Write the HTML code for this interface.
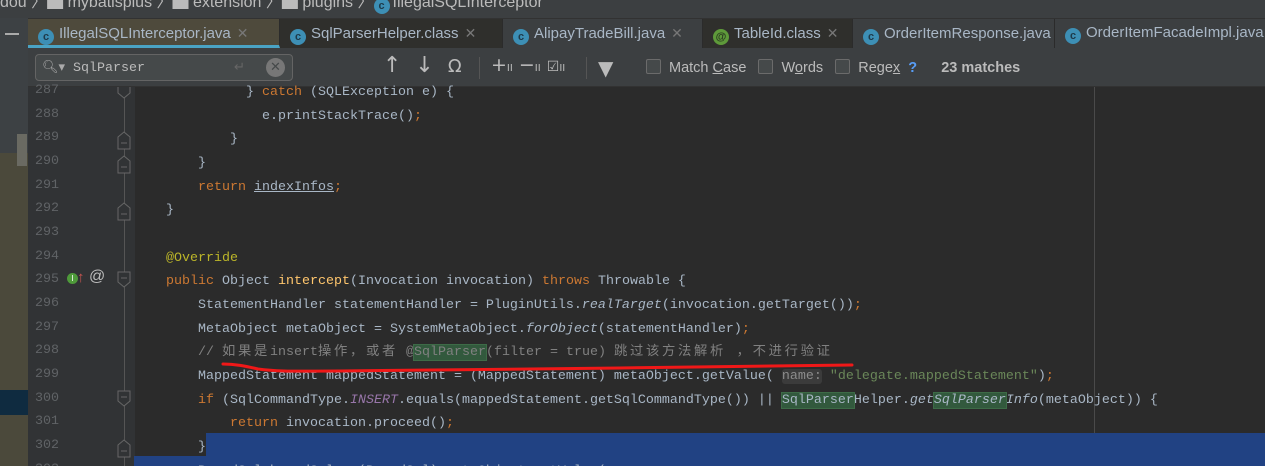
<!DOCTYPE html>
<html><head><meta charset="utf-8"><style>
*{margin:0;padding:0;box-sizing:border-box}
html,body{width:1265px;height:466px;overflow:hidden}
body{background:#2b2b2b;position:relative;font-family:"Liberation Sans","Noto Sans CJK SC",sans-serif;}
.abs{position:absolute}
.crumb{left:0;top:0;width:1265px;height:18px;background:#3c3f41;color:#bbb;font-size:16px;line-height:14px;white-space:nowrap;overflow:hidden}
.tabs{left:28px;top:18px;width:1237px;height:30px;background:#3c3f41;border-top:1px solid #323232}
.tab{position:absolute;top:0;height:29px;color:#a9b7c6;font-size:15px;line-height:28px;white-space:nowrap;border-right:1px solid #2b2b2b;overflow:hidden}
.ic{display:inline-block;width:16px;height:16px;border-radius:50%;background:#3d8fb5;color:#1e3a4a;font-size:11px;line-height:16px;text-align:center;font-weight:bold;vertical-align:-2px;margin:0 5px 0 10px}
.x{color:#777;margin-left:6px;font-size:14px}
.find{left:28px;top:48px;width:1237px;height:39px;background:#3c3f41;border-bottom:1px solid #323232}
.gut{left:28px;top:87px;width:107px;height:379px;background:#313335}
.code{left:0;top:83px;font-family:"Liberation Mono","Noto Sans CJK SC",monospace;font-size:13.33px;white-space:pre;color:#a9b7c6}
.ln{position:absolute;left:28px;width:31px;text-align:right;color:#606366;font-family:"Liberation Mono",monospace;font-size:13.33px}
.l{position:absolute;left:134px;height:24px;line-height:24px}
.k{color:#cc7832}.f{color:#ffc66d}.a{color:#bbb529}.cm{color:#808080}.s{color:#6a8759}.p{color:#9876aa;font-style:italic}.i{font-style:italic}
.m{background:#32593d;outline:1px solid #3d6b47}
.cj{letter-spacing:2.67px}
.cb{display:inline-block;width:15px;height:15px;border:1px solid #6b6b6b;border-radius:2px;background:#45494a;vertical-align:-2px;margin-right:8px}
</style></head><body>
<div class="abs crumb"><span style="position:relative;top:-4px">dou 〉▆ mybatisplus 〉▆ extension 〉▆ plugins 〉<span class="ic" style="margin:0 3px 0 0">c</span>IllegalSQLInterceptor</span></div>
<div class="abs" style="left:0;top:18px;width:28px;height:135px;background:#3d4144"></div>
<div class="abs" style="left:0;top:153px;width:28px;height:313px;background:#4b493b"></div>
<div class="abs" style="left:0;top:390px;width:28px;height:25px;background:#0f2b40"></div>
<div class="abs" style="left:17px;top:134px;width:10px;height:32px;background:#6a6a62"></div>
<div class="abs" style="left:5px;top:33px;width:14px;height:2px;background:#aaa"></div>
<div class="abs tabs">
 <div class="tab" style="left:0;width:252px;background:#4e4a3c;border-bottom:3px solid #4aa3c4"><span class="ic">c</span>IllegalSQLInterceptor.java<span class="x">✕</span></div>
 <div class="tab" style="left:252px;width:223px;background:#2f2f2c"><span class="ic">c</span>SqlParserHelper.class<span class="x">✕</span></div>
 <div class="tab" style="left:475px;width:200px"><span class="ic">c</span>AlipayTradeBill.java<span class="x">✕</span></div>
 <div class="tab" style="left:675px;width:150px;background:#2f2f2c"><span class="ic" style="background:#5e9a3a;color:#2a3a20">@</span>TableId.class<span class="x">✕</span></div>
 <div class="tab" style="left:825px;width:202px"><span class="ic">c</span>OrderItemResponse.java<span class="x">✕</span></div>
 <div class="tab" style="left:1027px;width:240px"><span class="ic">c</span>OrderItemFacadeImpl.java</div>
</div>
<div class="abs find">
 <div class="abs" style="left:7px;top:6px;width:258px;height:27px;background:#45494a;border:1px solid #646464;border-radius:4px;color:#bbb;font-family:'Liberation Mono',monospace;font-size:13.33px;line-height:25px;padding-left:6px">
  <span style="font-family:'DejaVu Sans';font-size:13px;color:#aaa">🔍︎▾</span> SqlParser
  <span class="abs" style="left:230px;top:3px;width:19px;height:19px;border-radius:50%;background:#777;color:#45494a;font-size:13px;line-height:19px;text-align:center;font-family:'DejaVu Sans'">✕</span>
  <span class="abs" style="left:198px;top:0;color:#666;font-family:'DejaVu Sans'">↵</span>
 </div>
 <div class="abs" style="left:355px;top:5px;color:#bbb;font-size:22px;font-family:'DejaVu Sans';white-space:pre">↑  ↓  <span style="font-size:18px">Ω</span></div>
 <div class="abs" style="left:451px;top:9px;width:1px;height:22px;background:#555"></div>
 <div class="abs" style="left:463px;top:6px;color:#bbb;font-size:19px;font-family:'DejaVu Sans';white-space:pre">+<span style="font-size:10px">II</span> −<span style="font-size:10px">II</span> <span style="font-size:14px">☑</span><span style="font-size:10px">II</span></div>
 <div class="abs" style="left:558px;top:9px;width:1px;height:22px;background:#555"></div>
 <div class="abs" style="left:570px;top:8px;color:#bbb;font-size:20px;font-family:'DejaVu Sans'">▼</div>
 <div class="abs" style="left:618px;top:11px;color:#bbb;font-size:14.5px;white-space:pre"><span class="cb"></span>Match <u>C</u>ase   <span class="cb"></span>W<u>o</u>rds   <span class="cb"></span>Rege<u>x</u>  <b style="color:#589df6">?</b>      <b>23 matches</b></div>
</div>
<div class="abs gut"></div>
<div class="abs" style="left:124px;top:87px;width:1px;height:379px;background:#555"></div>
<div class="abs" style="left:1094px;top:87px;width:1px;height:379px;background:#4a4a4a"></div>
<div class="abs" style="left:206px;top:433px;width:1059px;height:24px;background:#214283"></div>
<div class="abs" style="left:134px;top:456px;width:1131px;height:10px;background:#214283"></div>
<svg class="abs" style="left:116px;top:87px" width="18" height="379" fill="#313335" stroke="#666" stroke-width="1">
 <path d="M2,0 v6 l6,5 l6,-5 v-6"/>
 <path d="M2,50 l6,-5 l6,5 v12 h-12z M5,56 h6"/>
 <path d="M2,74 l6,-5 l6,5 v12 h-12z M5,80 h6"/>
 <path d="M2,121 l6,-5 l6,5 v12 h-12z M5,127 h6"/>
 <path d="M2,185 h12 v10 l-6,5 l-6,-5z M5,191 h6"/>
 <path d="M2,304 h12 v10 l-6,5 l-6,-5z M5,310 h6"/>
 <path d="M2,358 l6,-5 l6,5 v12 h-12z M5,364 h6"/>
</svg>
<div class="abs" style="left:67px;top:273px;width:11px;height:11px;border-radius:50%;background:#4e9a3a;color:#fff;font-size:8px;line-height:11px;text-align:center">I</div>
<div class="abs" style="left:77px;top:269px;color:#c75450;font-size:15px;font-weight:bold">↑</div>
<div class="abs" style="left:89px;top:268px;color:#bbb;font-size:16px">@</div>
<div class="abs code">
<div class="ln" style="top:0">287</div><div class="l" style="top:-2px;left:246px"><span>} </span><span class="k">catch </span>(SQLException e) {</div>
<div class="ln" style="top:24px">288</div><div class="l" style="top:22px;left:262px">e.printStackTrace()<span class="k">;</span></div>
<div class="ln" style="top:47px">289</div><div class="l" style="top:45px;left:230px">}</div>
<div class="ln" style="top:71px">290</div><div class="l" style="top:69px;left:198px">}</div>
<div class="ln" style="top:95px">291</div><div class="l" style="top:93px;left:198px"><span class="k">return </span><u>indexInfos</u><span class="k">;</span></div>
<div class="ln" style="top:118px">292</div><div class="l" style="top:116px;left:166px">}</div>
<div class="ln" style="top:142px">293</div>
<div class="ln" style="top:166px">294</div><div class="l" style="top:164px;left:166px"><span class="a">@Override</span></div>
<div class="ln" style="top:189px">295</div><div class="l" style="top:187px;left:166px"><span class="k">public </span>Object <span class="f">intercept</span>(Invocation invocation) <span class="k">throws </span>Throwable {</div>
<div class="ln" style="top:213px">296</div><div class="l" style="top:211px;left:198px">StatementHandler statementHandler = PluginUtils.<span class="i">realTarget</span>(invocation.getTarget())<span class="k">;</span></div>
<div class="ln" style="top:237px">297</div><div class="l" style="top:235px;left:198px">MetaObject metaObject = SystemMetaObject.<span class="i">forObject</span>(statementHandler)<span class="k">;</span></div>
<div class="ln" style="top:260px">298</div><div class="l cm" style="top:258px;left:198px">// <span class="cj">如果是</span>insert<span class="cj">操作，或者</span> @<span class="m">SqlParser</span>(filter = true) <span class="cj">跳过该方法解析 ，不进行验证</span></div>
<div class="ln" style="top:284px">299</div><div class="l" style="top:282px;left:198px">MappedStatement mappedStatement = (MappedStatement) metaObject.getValue( <span style="background:#3b3b3b;color:#8c8c8c;border-radius:3px">name:</span> <span class="s">"delegate.mappedStatement"</span>)<span class="k">;</span></div>
<div class="ln" style="top:308px">300</div><div class="l" style="top:306px;left:198px"><span class="k">if </span>(SqlCommandType.<span class="p">INSERT</span>.equals(mappedStatement.getSqlCommandType()) || <span class="m">SqlParser</span>Helper.<span class="i">get<span class="m">SqlParser</span>Info</span>(metaObject)) {</div>
<div class="ln" style="top:331px">301</div><div class="l" style="top:329px;left:230px"><span class="k">return </span>invocation.proceed()<span class="k">;</span></div>
<div class="ln" style="top:355px">302</div><div class="l" style="top:353px;left:198px">}</div>
<div class="ln" style="top:379px">303</div><div class="l" style="top:377px;left:198px">BoundSql boundSql = (BoundSql) metaObject.getValue(</div>
</div>
<svg class="abs" style="left:0;top:0" width="1265" height="466"><path d="M223,364 C235,364 245,366 258,369 C280,372 300,371 340,371 C420,370 520,369 620,368 C720,367 790,366 852,365" stroke="#f01818" stroke-width="3" fill="none" stroke-linecap="round"/></svg>
</body></html>
